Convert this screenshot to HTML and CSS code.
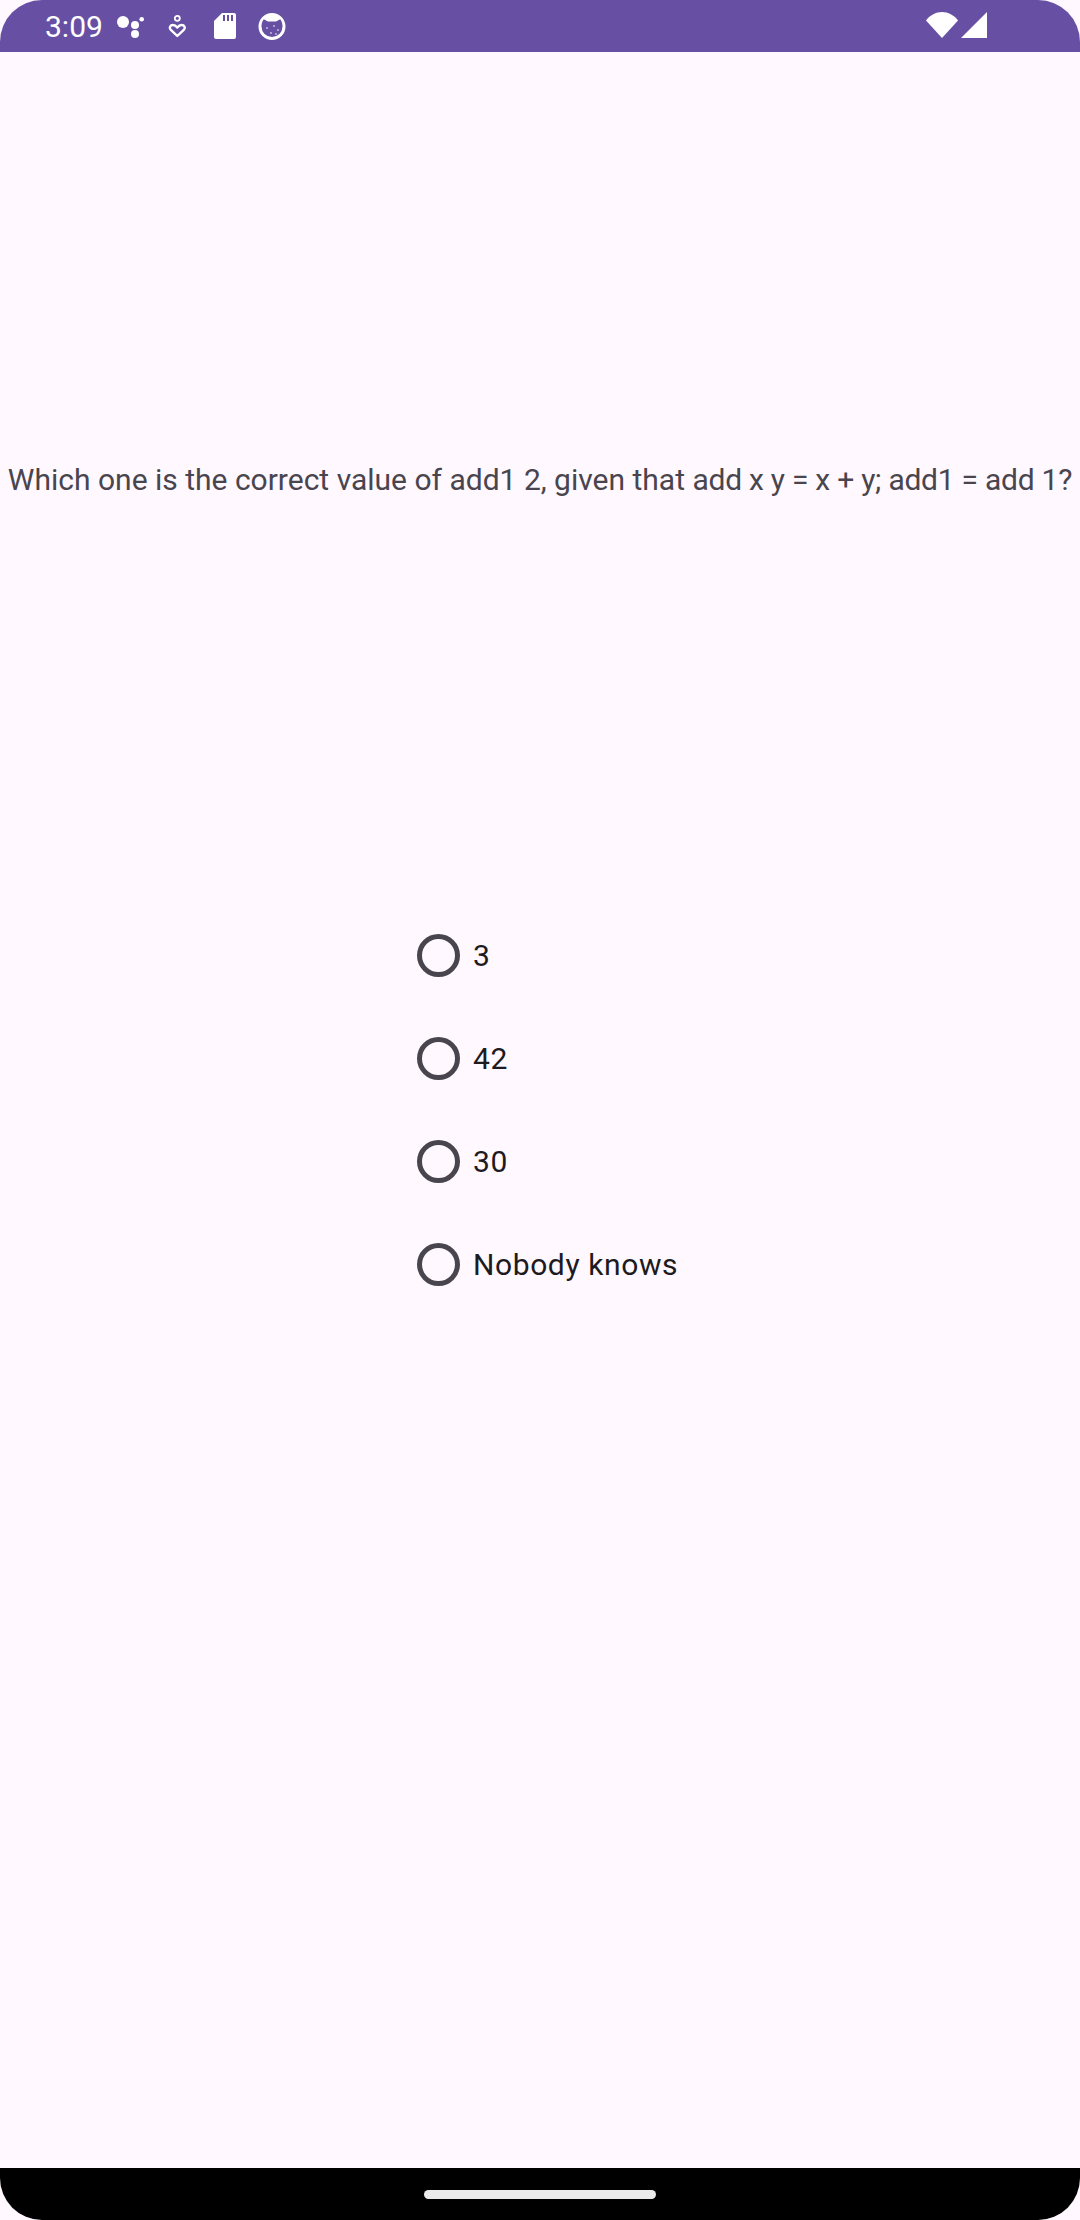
FILE: index.html
```html
<!DOCTYPE html>
<html lang="en">
<head>
    <meta charset="UTF-8">
    <title>quiz</title>
    <link rel="stylesheet" href="styles.css">
</head>
<body>
    <div class="screen">
        <div class="status-bar">
            <span class="clock">3:09</span>
            <svg class="icon icon-dots" viewBox="0 0 28 25"><circle cx="6" cy="8" r="6" fill="#fff"/><circle cx="18" cy="11" r="4" fill="#fff"/><circle cx="24.700" cy="5.300" r="2.300" fill="#fff"/><circle cx="18" cy="20" r="4" fill="#fff"/></svg>
            <svg class="icon icon-heart" viewBox="0 0 18 25"><circle cx="9.300" cy="4.300" r="2.500" fill="none" stroke="#fff" stroke-width="1.800"/><path d="M9.300 22 2.600 15.600C1 13.600 2.300 11 4.800 11 6.800 11 8.200 12 9.300 13.600 10.400 12 11.800 11 13.800 11 16.300 11 17.600 13.600 16 15.600Z" fill="none" stroke="#fff" stroke-width="2.400" stroke-linejoin="round"/></svg>
            <svg class="icon icon-sd" viewBox="0 0 22 26"><path fill-rule="evenodd" fill="#fff" d="M8 0H20a2 2 0 0 1 2 2V24a2 2 0 0 1-2 2H2a2 2 0 0 1-2-2V8ZM9 2V8H11V2ZM13 2V8H15V2ZM17 2V8H19V2Z"/></svg>
            <svg class="icon icon-app" viewBox="0 0 28 27"><path fill-rule="evenodd" fill="#fff" d="M14 0A13.500 13.500 0 1 1 14 27 13.500 13.500 0 1 1 14 0ZM5.500 6.500C4 9 3.500 11 3.500 13.500A10.500 10.500 0 0 0 24.500 13.500C24.500 11 24 9 22.500 6.500 21 6 20 8 18 8.500H10C8 8 7 6 5.500 6.500Z"/><circle cx="9" cy="15" r="1" fill="#fff" opacity=".6"/><circle cx="16" cy="13" r="1" fill="#fff" opacity=".6"/><circle cx="20" cy="17" r="1" fill="#fff" opacity=".6"/><circle cx="13" cy="20" r="1" fill="#fff" opacity=".6"/><circle cx="18" cy="21" r="1" fill="#fff" opacity=".6"/></svg>
            <span class="spacer"></span>
            <svg class="icon icon-wifi" viewBox="0 0 32 26"><path d="M0 8.500C4 3 10 0 16 0S28 3 32 8.500L16 26Z" fill="#fff"/></svg>
            <svg class="icon icon-signal" viewBox="0 0 26 26"><path d="M26 0V26H0Z" fill="#fff"/></svg>
        </div>

        <div class="content">
            <p class="question">Which one is the correct value of add1 2, given that <span class="question-tail">add x y = x + y; add1 = add 1?</span></p>
            <div class="options">
                <div class="option"><span class="radio"></span><span>3</span></div>
                <div class="option"><span class="radio"></span><span>42</span></div>
                <div class="option"><span class="radio"></span><span>30</span></div>
                <div class="option"><span class="radio"></span><span>Nobody knows</span></div>
            </div>
        </div>

        <div class="nav-bar">
            <div class="handle"></div>
        </div>
    </div>
</body>
</html>
```

FILE: styles.css
```css
html, body {
    margin: 0;
    background-color: #ffffff;
}

.screen {
    width: 1080px;
    height: 2220px;
    display: flex;
    flex-direction: column;
    font-family: Roboto, sans-serif;
    background-color: #fff8fe;
}

.status-bar {
    height: 52px;
    flex: none;
    display: flex;
    align-items: center;
    padding: 0 93px 0 45px;
    background-color: #6750a4;
    border-radius: 42px 42px 0 0;
}

.clock {
    color: #fff;
    font-size: 30px;
    width: 72px;
}

.icon {
    flex: none;
    display: block;
}

.icon-dots {
    width: 28px;
    height: 25px;
    margin-top: 1px;
}

.icon-heart {
    width: 18px;
    height: 25px;
    margin-left: 23px;
    margin-top: 1px;
}

.icon-sd {
    width: 22px;
    height: 26px;
    margin-left: 28px;
}

.icon-app {
    width: 28px;
    height: 27px;
    margin-left: 22px;
}

.spacer {
    flex: 1;
}

.icon-wifi {
    width: 32px;
    height: 26px;
    margin-right: 3px;
    margin-top: -2px;
}

.icon-signal {
    width: 26px;
    height: 26px;
    margin-top: -2px;
}

.content {
    flex: 1;
    display: flex;
    flex-direction: column;
    align-items: center;
}

.question {
    margin: 408px 0 0;
    height: 40px;
    line-height: 40px;
    font-size: 30px;
    color: #49454f;
    white-space: nowrap;
}

/* the symbols in this part run narrower in the original */
.question-tail {
    letter-spacing: -0.250px;
}

.options {
    margin-top: 404px;
    display: flex;
    flex-direction: column;
    align-self: flex-start;
    margin-left: 417px;
}

.option {
    height: 103px;
    display: flex;
    align-items: center;
    gap: 13px;
    font-size: 30px;
    letter-spacing: 0.600px;
    color: #1d1b20;
}

.radio {
    width: 43px;
    height: 43px;
    box-sizing: border-box;
    border: 5px solid #49454f;
    border-radius: 50%;
}

.nav-bar {
    height: 52px;
    flex: none;
    display: flex;
    justify-content: center;
    padding-top: 22px;
    box-sizing: border-box;
    background-color: #000;
    border-radius: 0 0 42px 42px;
}

.handle {
    width: 232px;
    height: 9px;
    border-radius: 5px;
    background-color: #ebebeb;
}
```
